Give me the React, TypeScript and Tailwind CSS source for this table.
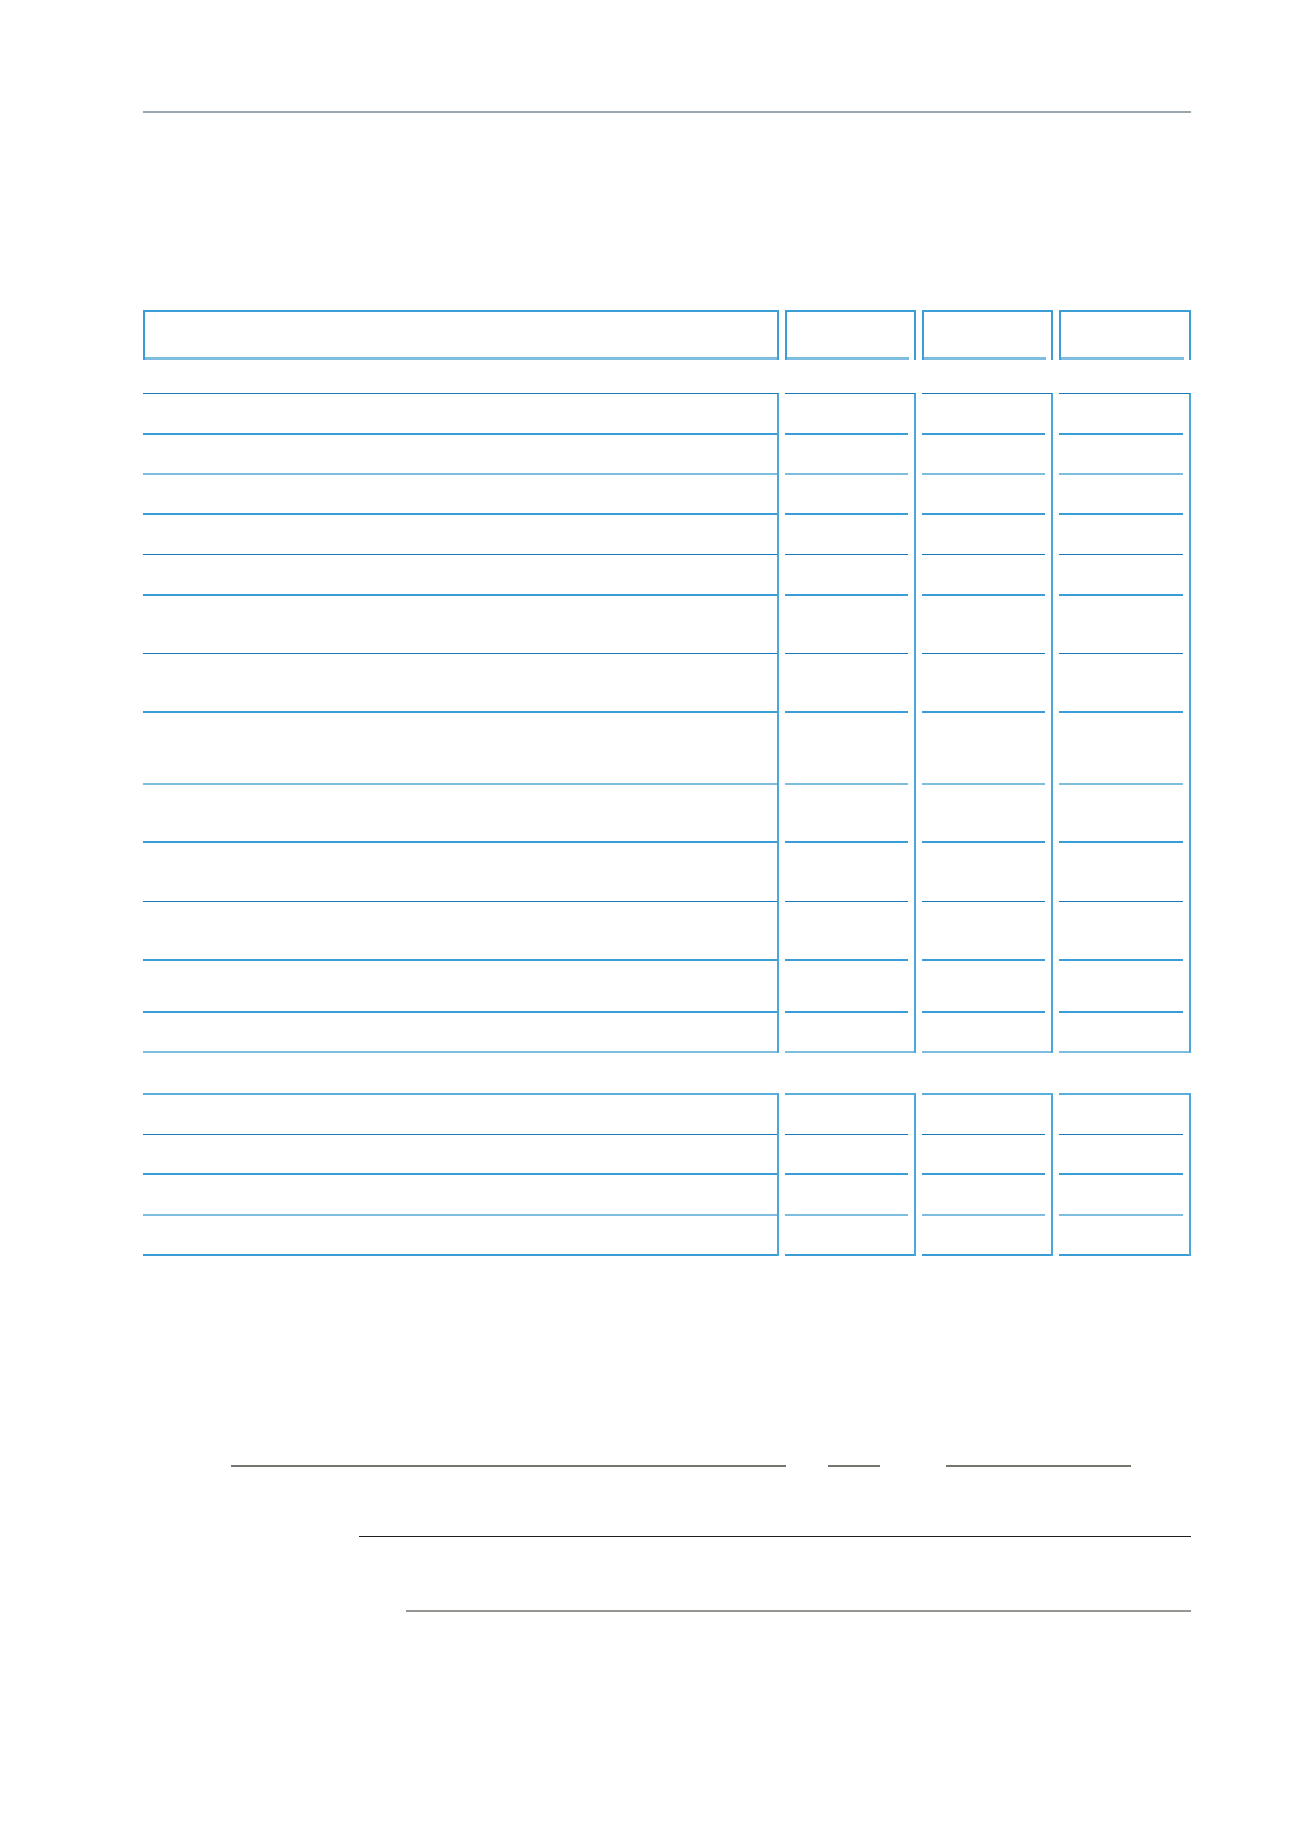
const line = {
  light: 'border-b-2 border-b-[#7dbde0]',
  mid: 'border-b-2 border-b-[#3a9dd5]',
  dark: 'border-b border-b-[#1b78b6]',
};

type Kind = keyof typeof line;

// row heights measured line to line, with the style of the line under each row
const mainRows: [number, Kind][] = [
  [41, 'mid'],
  [40, 'light'],
  [40, 'mid'],
  [40, 'dark'],
  [41, 'mid'],
  [58, 'dark'],
  [59, 'mid'],
  [72, 'light'],
  [58, 'mid'],
  [59, 'dark'],
  [59, 'mid'],
  [52, 'mid'],
  [40, 'light'],
];

const lowerRows: [number, Kind][] = [
  [40, 'dark'],
  [40, 'mid'],
  [41, 'light'],
  [40, 'mid'],
];

function HeaderBox({ wide }: { wide?: boolean }) {
  return (
    <div className="h-[50px] flex flex-col border-t-2 border-x-2 border-[#3b9fd6]">
      <div className="flex-1" />
      <div className={wide ? 'h-[3px] bg-[#7dbde0]' : 'h-[3px] bg-[#7dbde0] mr-[5px]'} />
    </div>
  );
}

function Column({ rows, wide, top }: { rows: [number, Kind][]; wide?: boolean; top: string }) {
  return (
    <div className={`flex flex-col border-r-2 border-r-[#4ba7db] ${top}`}>
      {rows.map(([h, kind], i) => {
        const last = i === rows.length - 1;
        return (
          <div
            key={i}
            style={{ height: h }}
            className={`${line[kind]} ${wide || last ? '' : 'mr-[6px]'}`}
          />
        );
      })}
    </div>
  );
}

function Table({ rows, top }: { rows: [number, Kind][]; top: string }) {
  return (
    <div className="grid grid-cols-[636px_131px_131px_132px] gap-x-[6px]">
      <Column rows={rows} wide top={top} />
      <Column rows={rows} top={top} />
      <Column rows={rows} top={top} />
      <Column rows={rows} top={top} />
    </div>
  );
}

export default function App() {
  return (
    <div className="min-h-[1839px] bg-white pl-[143px] pr-[109px] pt-[111px]">
      <div className="h-[2px] bg-[#9aa6ae]" />

      <div className="mt-[197px] grid grid-cols-[636px_131px_131px_132px] gap-x-[6px]">
        <HeaderBox wide />
        <HeaderBox />
        <HeaderBox />
        <HeaderBox />
      </div>

      <div className="mt-[33px]">
        <Table rows={mainRows} top="border-t border-t-[#1b78b6]" />
      </div>

      <div className="mt-[40px]">
        <Table rows={lowerRows} top="border-t-2 border-t-[#5aaedc]" />
      </div>

      {/* signature / date / stamp */}
      <div className="mt-[209px] flex items-center">
        <div className="ml-[88px] w-[555px] h-[2px] bg-[#77736d]" />
        <div className="ml-[42px] w-[52px] h-[2px] bg-[#77736d]" />
        <div className="ml-[66px] w-[185px] h-[2px] bg-[#77736d]" />
      </div>

      <div className="mt-[69px] ml-[216px] h-px bg-[#1f1f1f]" />
      <div className="mt-[73px] ml-[263px] h-[2px] bg-[#999590]" />
    </div>
  );
}
